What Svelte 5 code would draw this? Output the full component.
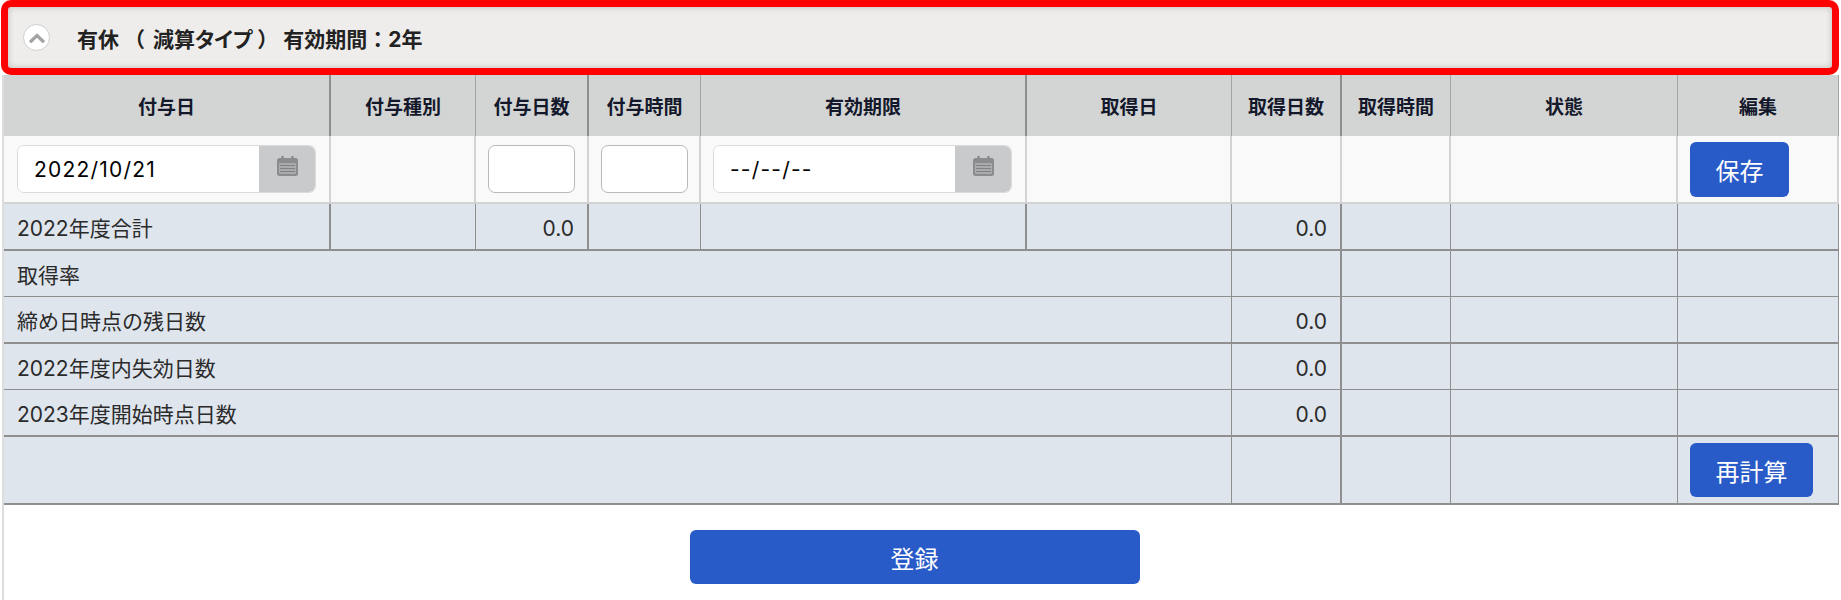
<script>
  const columns = ["付与日", "付与種別", "付与日数", "付与時間", "有効期限", "取得日", "取得日数", "取得時間", "状態", "編集"];
  const heavyAfter = [0, 2, 4, 6];

  const notes = [
    { label: "取得率", value: "", line: "thin" },
    { label: "締め日時点の残日数", value: "0.0", line: "thick" },
    { label: "2022年度内失効日数", value: "0.0", line: "thin" },
    { label: "2023年度開始時点日数", value: "0.0", line: "thick" }
  ];
</script>

{#snippet calendar()}
  <svg class="cal" viewBox="0 0 21 20" width="21" height="20" aria-hidden="true">
    <rect x="4.5" y="0" width="2" height="4" fill="#7d7f81" />
    <rect x="14.5" y="0" width="2" height="4" fill="#7d7f81" />
    <rect x="0" y="2" width="21" height="18" rx="2.5" fill="#8a8c8e" />
    <rect x="2" y="7" width="17" height="11" rx="1" fill="#a9abad" />
    <path d="M3 9.5h15M3 12.5h15M3 15.5h15" stroke="#808284" stroke-width="1" />
  </svg>
{/snippet}

<main>
  <header class="title">
    <span class="toggle">
      <svg viewBox="0 0 16 10" width="16" height="10" aria-hidden="true">
        <path d="M2 8.2 L8 2.5 L14 8.2" fill="none" stroke="#a4a4a4" stroke-width="3.4" stroke-linecap="round" />
      </svg>
    </span>
    <h2>有休 （ <span class="kind">減算タイプ</span> ） 有効期間：2年</h2>
  </header>

  <section class="panel">
    <table>
      <colgroup>
        <col style="width: 327px" />
        <col style="width: 145px" />
        <col style="width: 113px" />
        <col style="width: 112px" />
        <col style="width: 326px" />
        <col style="width: 205px" />
        <col style="width: 110px" />
        <col style="width: 109px" />
        <col style="width: 227px" />
        <col style="width: 161px" />
      </colgroup>
      <thead>
        <tr>
          {#each columns as name, i}
            <th class:heavy={heavyAfter.includes(i)}>{name}</th>
          {/each}
        </tr>
      </thead>
      <tbody>
        <tr class="edit">
          <td>
            <div class="date">
              <input type="text" value="2022/10/21" />
              <span class="addon">{@render calendar()}</span>
            </div>
          </td>
          <td></td>
          <td><input class="num" type="text" /></td>
          <td><input class="num" type="text" /></td>
          <td>
            <div class="date">
              <input type="text" value="--/--/--" />
              <span class="addon">{@render calendar()}</span>
            </div>
          </td>
          <td></td>
          <td></td>
          <td></td>
          <td></td>
          <td><button class="btn save">保存</button></td>
        </tr>

        <tr class="sum thick">
          <td class="heavy">2022年度合計</td>
          <td></td>
          <td class="val heavy">0.0</td>
          <td></td>
          <td class="heavy"></td>
          <td></td>
          <td class="val heavy">0.0</td>
          <td></td>
          <td></td>
          <td></td>
        </tr>

        {#each notes as row}
          <tr class="sum {row.line}">
            <td colspan="6">{row.label}</td>
            <td class="val heavy">{row.value}</td>
            <td></td>
            <td></td>
            <td></td>
          </tr>
        {/each}

        <tr class="sum thick last">
          <td colspan="6"></td>
          <td class="heavy"></td>
          <td></td>
          <td></td>
          <td><button class="btn recalc">再計算</button></td>
        </tr>
      </tbody>
    </table>

    <div class="footer">
      <button class="btn submit">登録</button>
    </div>
  </section>
</main>

<style>
  :global(body) {
    margin: 0;
    background: #fff;
  }

  main {
    width: 1841px;
    height: 600px;
    overflow: hidden;
    font-family: "Inter", "Noto Sans CJK JP", sans-serif;
    color: #2b2b2b;
  }

  .title {
    box-sizing: border-box;
    width: 1838px;
    height: 75px;
    margin-left: 1px;
    padding-left: 15px;
    display: flex;
    align-items: center;
    gap: 27px;
    background: #eeedeb;
    border: 7px solid #f00;
    border-radius: 10px;
    box-shadow: inset 0 0 6px rgba(0, 0, 0, 0.22);
  }

  .toggle {
    box-sizing: border-box;
    width: 27px;
    height: 27px;
    border-radius: 50%;
    background: #fff;
    border: 1.5px solid #cfcfcf;
    display: flex;
    align-items: center;
    justify-content: center;
  }

  h2 {
    margin: 0;
    font-size: 21px;
    font-weight: 700;
    color: #222;
    white-space: pre;
  }

  .kind {
    font-feature-settings: "palt";
    margin-left: 3px;
  }

  .panel {
    box-sizing: border-box;
    width: 1839px;
    height: 525px;
    border-left: 2px solid #ddd;
    margin-left: 2px;
  }

  table {
    table-layout: fixed;
    width: 1835px;
    border-collapse: separate;
    border-spacing: 0;
  }

  th {
    box-sizing: border-box;
    height: 61px;
    padding: 0;
    background: #d3d5d4;
    color: #14182b;
    font-size: 19px;
    font-weight: 700;
    text-align: center;
    border-right: 1px solid #a3a5a4;
  }

  th.heavy {
    border-right: 2px solid #8f8f8f;
  }

  td {
    box-sizing: border-box;
    padding: 0;
    vertical-align: middle;
  }

  .edit td {
    height: 68px;
    padding-left: 12px;
    background: #f9f9f9;
    border-right: 2px solid #d3d3d3;
    border-bottom: 2px solid #d3d3d3;
  }

  .edit td:first-child {
    padding-left: 13px;
  }

  .sum td {
    height: 47px;
    padding: 0 14px 0 13px;
    background: #dfe5ed;
    font-size: 21px;
    border-right: 1px solid #8f8f8f;
  }

  .sum td.heavy {
    border-right-width: 2px;
  }

  .sum.thin td {
    height: 46px;
    border-bottom: 1px solid #8f8f8f;
  }

  .sum.thick td {
    border-bottom: 2px solid #8f8f8f;
  }

  .sum.last td {
    height: 68px;
  }

  .sum.last td:last-child {
    padding: 0 0 0 12px;
  }

  .sum td.val {
    padding: 3px 13px 0 0;
    text-align: right;
  }

  .date {
    box-sizing: border-box;
    width: 299px;
    height: 48px;
    display: flex;
    border: 1px solid #dcdcdc;
    border-radius: 7px;
    overflow: hidden;
    background: #fff;
  }

  input {
    font: inherit;
    font-size: 21px;
    color: #000;
    outline: none;
  }

  .date input {
    flex: 1;
    min-width: 0;
    border: 0;
    padding: 0 0 0 16px;
    letter-spacing: 1.2px;
    background: #fff;
  }

  .addon {
    width: 56px;
    background: #c9cacc;
    display: flex;
    align-items: center;
    justify-content: center;
    padding-bottom: 6px;
    box-sizing: border-box;
  }

  .cal {
    display: block;
  }

  .num {
    box-sizing: border-box;
    display: block;
    width: 87px;
    height: 48px;
    padding: 0;
    background: #fff;
    border: 1px solid #b9b9b9;
    border-radius: 7px;
  }

  .btn {
    display: block;
    border: 0;
    border-radius: 6px;
    background: #295bc8;
    color: #fff;
    font: inherit;
    font-size: 24px;
    padding: 0;
  }

  .save {
    width: 99px;
    height: 55px;
  }

  .recalc {
    width: 123px;
    height: 54px;
  }

  .footer {
    display: flex;
    justify-content: center;
    padding: 25px 16px 0 0;
  }

  .submit {
    width: 450px;
    height: 54px;
  }
</style>
